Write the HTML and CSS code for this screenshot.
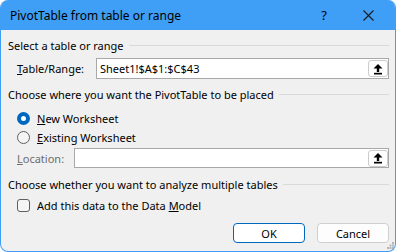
FILE: index.html
```html
<!DOCTYPE html>
<html>
<head>
<meta charset="utf-8">
<link rel="stylesheet" href="styles.css">
</head>
<body>
<div class="window">
  <div class="titlebar">
    <span class="title">PivotTable from table or range</span>
    <span class="help">?</span>
    <span class="close"><svg width="11" height="11" viewBox="0 0 11 11"><path d="M0.5 0.5 L10.5 10.5 M10.5 0.5 L0.5 10.5" stroke="#1a1a1a" stroke-width="1.1" fill="none"/></svg></span>
  </div>
  <div class="body">
    <div class="group-head h1"><span>Select a table or range</span><div class="rule"></div></div>
    <div class="field-row r-table">
      <span class="label w-table"><u>T</u>able/Range:</span>
      <div class="input"><span class="value">Sheet1!$A$1:$C$43</span>
        <span class="ref-btn"><svg width="10" height="12" viewBox="0 0 10 12"><polygon points="0.5,5.5 5,1 9.5,5.5" fill="#000"/><rect x="3.8" y="5" width="2.4" height="4" fill="#000"/><rect x="1" y="9.8" width="8" height="1.7" fill="#000"/></svg></span>
      </div>
    </div>
    <div class="group-head h2"><span>Choose where you want the PivotTable to be placed</span><div class="rule"></div></div>
    <div class="option r-new"><span class="radio checked"></span><span><u>N</u>ew Worksheet</span></div>
    <div class="option r-exist"><span class="radio"></span><span><u>E</u>xisting Worksheet</span></div>
    <div class="field-row r-loc">
      <span class="label w-loc disabled"><u>L</u>ocation:</span>
      <div class="input"><span class="value"></span>
        <span class="ref-btn"><svg width="10" height="12" viewBox="0 0 10 12"><polygon points="0.5,5.5 5,1 9.5,5.5" fill="#000"/><rect x="3.8" y="5" width="2.4" height="4" fill="#000"/><rect x="1" y="9.8" width="8" height="1.7" fill="#000"/></svg></span>
      </div>
    </div>
    <div class="group-head h3"><span>Choose whether you want to analyze multiple tables</span><div class="rule"></div></div>
    <div class="option r-check"><span class="checkbox"></span><span>Add this data to the Data <u>M</u>odel</span></div>
    <div class="buttons">
      <span class="btn default">OK</span>
      <span class="btn">Cancel</span>
    </div>
  </div>
  <svg class="grip" width="7" height="7" viewBox="0 0 7 7"><g fill="#b5b5b5"><rect x="5" y="0" width="2" height="2"/><rect x="2.5" y="2.5" width="2" height="2"/><rect x="5" y="2.5" width="2" height="2"/><rect x="0" y="5" width="2" height="2"/><rect x="2.5" y="5" width="2" height="2"/><rect x="5" y="5" width="2" height="2"/></g></svg>
</div>
</body>
</html>
```
FILE: styles.css
```css
* { box-sizing: border-box; }
html, body { margin: 0; padding: 0; background: #ffffff; }
body {
  font-family: "Noto Sans", "Open Sans", sans-serif;
  font-size: 11px;
  color: #000;
}
.window {
  position: relative;
  width: 396px;
  height: 252px;
  background: #f0f0f0;
  border: 1px solid #3f9ef5;
  border-top: 0;
  border-radius: 8px;
  overflow: hidden;
  display: flex;
  flex-direction: column;
}
.titlebar {
  height: 30px;
  background: #3f9ef5;
  display: flex;
  align-items: center;
  padding-left: 9px;
  flex-shrink: 0;
}
.title { font-size: 12px; flex: 1; padding-top: 1px; }
.help { font-size: 13px; width: 44px; text-align: center; margin-right: 2px; }
.close { width: 40px; display: flex; justify-content: center; margin-right: 7px; padding-top: 1px; }
.body {
  padding: 0 6px 0 7px;
  display: flex;
  flex-direction: column;
}
.group-head {
  height: 16px;
  display: flex;
  align-items: center;
  gap: 5px;
  white-space: nowrap;
}
.rule { flex: 1; height: 1px; background: #d9d9d9; }
.h1 { margin-top: 7px; }
.h2 { margin-top: 7px; }
.h3 { margin-top: 8px; }
.field-row { display: flex; align-items: center; padding-left: 9px; }
.r-table { margin-top: 5px; height: 21px; }
.r-loc { margin-top: 3px; height: 20px; }
.label { flex-shrink: 0; }
.w-table { width: 79px; }
.w-loc { width: 57px; }
.disabled { color: #6d6d6d; }
.input {
  flex: 1;
  height: 100%;
  background: #fff;
  border: 1px solid #a8a8a8;
  display: flex;
  align-items: center;
  padding: 1px 0 1px 3px;
}
.value { flex: 1; }
.ref-btn {
  width: 20px;
  height: 17px;
  border: 1px solid #cccccc;
  border-radius: 3px;
  background: #fff;
  display: flex;
  align-items: center;
  justify-content: center;
}
.option { display: flex; align-items: center; height: 16px; padding-left: 9px; gap: 7px; }
.r-new { margin-top: 8px; }
.r-exist { margin-top: 3px; }
.r-check { margin-top: 5px; }
.radio {
  width: 13px; height: 13px; border-radius: 50%;
  border: 1px solid #5f5f5f;
  background: #f5f5f5;
  flex-shrink: 0;
}
.radio.checked {
  border: 4.5px solid #0067c0;
  background: #fff;
}
.checkbox {
  width: 13px; height: 13px; border-radius: 3px;
  border: 1px solid #5f5f5f;
  background: #f5f5f5;
  flex-shrink: 0;
}
.buttons { display: flex; justify-content: flex-end; gap: 12px; margin-top: 10px; }
.btn {
  width: 72px; height: 20px;
  border: 1px solid #cfcfcf;
  border-radius: 4px;
  background: #fdfdfd;
  display: flex; align-items: center; justify-content: center;
}
.btn.default { border-color: #0067c0; background: #fff; }
.grip { position: absolute; right: 1px; bottom: 2px; }
```
